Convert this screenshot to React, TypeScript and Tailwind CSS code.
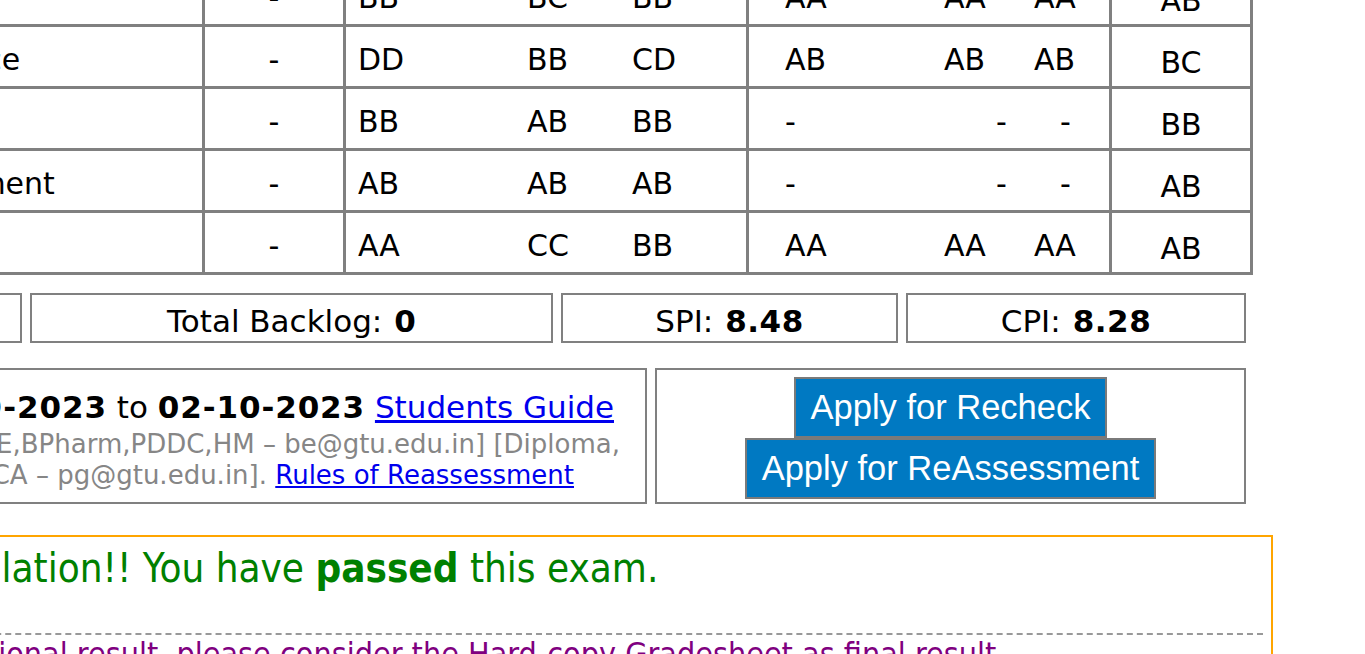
const rows = [
  { name: 'Operating System', theory: ['BB', 'BC', 'BB'], prac: ['AA', 'AA', 'AA'], grade: 'AB' },
  { name: 'Introduction to Data Science', theory: ['DD', 'BB', 'CD'], prac: ['AB', 'AB', 'AB'], grade: 'BC' },
  { name: 'Computer Networks', theory: ['BB', 'AB', 'BB'], prac: ['-', '-', '-'], grade: 'BB' },
  { name: 'Software Product Management', theory: ['AB', 'AB', 'AB'], prac: ['-', '-', '-'], grade: 'AB' },
  { name: 'Compiler Design', theory: ['AA', 'CC', 'BB'], prac: ['AA', 'AA', 'AA'], grade: 'AB' },
];

function GradeTable() {
  return (
    <div className="-ml-[415px] -mt-[38px] grid w-[1668px] grid-cols-[614px_138px_400px_360px_138px] auto-rows-[59px] gap-[3px] bg-[#808080] p-[3px] text-[30px] leading-[35px] text-black">
      {rows.map(row => {
        const noPrac = row.prac[0] === '-';
        return [
          <div key={row.name + 'n'} className="bg-white pl-[4px] pt-[15px] whitespace-nowrap">
            {row.name}
          </div>,
          <div key={row.name + 'r'} className="bg-white pt-[15px] text-center">
            -
          </div>,
          <div key={row.name + 't'} className="flex bg-white pl-[12px] pt-[15px]">
            <span className="w-[169px]">{row.theory[0]}</span>
            <span className="w-[105px]">{row.theory[1]}</span>
            <span>{row.theory[2]}</span>
          </div>,
          <div key={row.name + 'p'} className="flex bg-white pl-[36px] pt-[15px]">
            <span className="w-[159px]">{row.prac[0]}</span>
            <span className={noPrac ? 'w-[90px] pl-[52px]' : 'w-[90px]'}>{row.prac[1]}</span>
            <span className={noPrac ? 'pl-[26px]' : ''}>{row.prac[2]}</span>
          </div>,
          <div key={row.name + 'g'} className="bg-white pt-[18px] text-center">
            {row.grade}
          </div>,
        ];
      })}
    </div>
  );
}

function SummaryRow() {
  const box = 'flex h-[50px] shrink-0 items-center justify-center border-2 border-[#808080] pt-[6px] whitespace-nowrap';
  return (
    <div className="mt-[18px] -ml-[700px] flex gap-[8px] text-[31px] leading-[36px]">
      <div className={box + ' w-[722px]'}>
        Current Backlog: <b className="ml-[12px]">0</b>
      </div>
      <div className={box + ' w-[523px]'}>
        Total Backlog: <b className="ml-[12px]">0</b>
      </div>
      <div className={box + ' w-[337px]'}>
        SPI: <b className="ml-[12px] tracking-[0.5px]">8.48</b>
      </div>
      <div className={box + ' w-[340px]'}>
        CPI: <b className="ml-[12px] tracking-[0.5px]">8.28</b>
      </div>
    </div>
  );
}

function ApplyRow() {
  const btn =
    "flex h-[61px] items-center border-2 border-[#7a7a7a] bg-[#0079c2] px-[15px] font-['Liberation_Sans',Arial,sans-serif] text-[34.5px] text-white";
  return (
    <div className="mt-[25px] -ml-[900px] flex gap-[8px]">
      <div className="h-[136px] w-[1547px] shrink-0 border-2 border-[#808080] pt-[19px] text-right whitespace-nowrap">
        <div className="pr-[31px] text-[31px] leading-[36px]">
          Recheck/Reassessment: <b className="tracking-[0.9px]">26-09-2023</b> to{' '}
          <b className="tracking-[0.9px]">02-10-2023</b>{' '}
          <a href="#" className="text-[#0000ee] underline">
            Students Guide
          </a>
        </div>
        <div className="mt-[4px] text-[26px] leading-[31px] text-[#868686]">
          <div className="pr-[25px]">[Contact: BE,BPharm,PDDC,HM – be@gtu.edu.in] [Diploma,</div>
          <div className="pr-[71px]">
            DPharm – diploma@gtu.edu.in] [ME,MPharm,MBA,MCA – pg@gtu.edu.in].{' '}
            <a href="#" className="text-[#0000ee] underline">
              Rules of Reassessment
            </a>
          </div>
        </div>
      </div>
      <div className="flex h-[136px] w-[591px] shrink-0 flex-col items-center border-2 border-[#808080] pt-[7px]">
        <button className={btn}>Apply for Recheck</button>
        <button className={btn}>Apply for ReAssessment</button>
      </div>
    </div>
  );
}

function ResultNote() {
  return (
    <div className="mt-[31px] -ml-[183px] w-[1456px] border-2 border-[#ffa500] pl-[16px] pr-[8px] pt-[8px] font-['DejaVu_Sans_Condensed','DejaVu_Sans',sans-serif] font-stretch-condensed">
      <div className="text-[40px] leading-[47px] whitespace-nowrap text-[#008000]">
        Congratulation!! You have <b>passed</b> this exam.
      </div>
      <div className="mt-[41px] border-t-2 border-dashed border-[#999999] pt-[1px]">
        <div className="-ml-[24px] text-[32px] leading-[36px] whitespace-nowrap text-[#800080]">
          This is provisional result, please consider the Hard-copy Gradesheet as final result.
        </div>
      </div>
    </div>
  );
}

export default function App() {
  return (
    <div className="h-[654px] w-[1365px] overflow-hidden bg-white font-['DejaVu_Sans',Verdana,sans-serif] text-black">
      <GradeTable />
      <SummaryRow />
      <ApplyRow />
      <ResultNote />
    </div>
  );
}
